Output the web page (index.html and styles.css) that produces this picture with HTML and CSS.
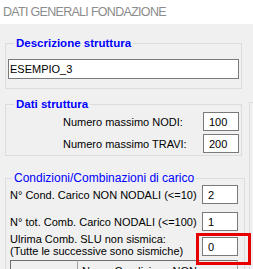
FILE: index.html
```html
<!DOCTYPE html>
<html lang="it">
<head>
    <meta charset="UTF-8">
    <meta name="viewport" content="width=device-width, initial-scale=1.0">
    <title>Dati generali fondazione</title>
    <link rel="stylesheet" href="styles.css">
</head>
<body>
    <div class="title">DATI GENERALI FONDAZIONE</div>
    <div class="main">
        <div class="left">
            <fieldset class="group g1">
                <legend class="bold">Descrizione struttura</legend>
                <input class="wide" type="text" value="ESEMPIO_3">
            </fieldset>

            <fieldset class="group g2">
                <legend class="bold">Dati struttura</legend>
                <div class="row">
                    <span class="lbl">Numero massimo NODI:</span>
                    <input class="num" type="text" value="100">
                </div>
                <div class="row">
                    <span class="lbl">Numero massimo TRAVI:</span>
                    <input class="num" type="text" value="200">
                </div>
            </fieldset>

            <fieldset class="group g3">
                <legend class="big">Condizioni/Combinazioni di carico</legend>
                <div class="row r1">
                    <span class="lbl">N° Cond. Carico NON NODALI (&lt;=10)</span>
                    <input class="num" type="text" value="2">
                </div>
                <div class="row r2">
                    <span class="lbl">N° tot. Comb. Carico NODALI (&lt;=100)</span>
                    <input class="num" type="text" value="1">
                </div>
                <div class="row r3">
                    <span class="lbl two">Ulrima Comb. SLU non sismica:<br>(Tutte le successive sono sismiche)</span>
                    <input class="num" type="text" value="0">
                    <div class="mark"></div>
                </div>
                <table class="grid">
                    <tr>
                        <th class="c1">N° Cond.</th>
                        <th class="c2">Nome Condizione NON nodale</th>
                    </tr>
                    <tr>
                        <td>1</td>
                        <td></td>
                    </tr>
                </table>
            </fieldset>
        </div>
        <div class="side"></div>
    </div>
</body>
</html>
```

FILE: styles.css
```css
body {
    margin: 0;
    width: 253px;
    height: 269px;
    overflow: hidden;
    background-color: #f0f0f0;
    font-family: "Liberation Sans", Arial, sans-serif;
    font-size: 11px;
    color: #000;
}
.title {
    height: 24px;
    background-color: #fff;
    color: #8c8c8c;
    font-size: 12.5px;
    line-height: 24px;
    letter-spacing: -0.7px;
    padding-left: 3px;
}
.main {
    display: flex;
    padding-left: 5px;
}
.left {
    width: 240px;
}
.side {
    flex: 1;
    margin-left: 4px;
    margin-top: 78px;
    height: 300px;
    border-left: 1px solid #dcdcdc;
    border-top: 1px solid #dcdcdc;
}
.group {
    margin: 0;
    border: 1px solid #dcdcdc;
    padding: 0 2px;
    min-width: 0;
}
.group legend {
    color: #0000ff;
    padding: 0 2px;
    margin-left: 6px;
}
.bold {
    font-weight: bold;
    font-size: 11.5px;
    line-height: 13px;
}
.big {
    font-size: 12px;
    line-height: 14px;
}
.g1 {
    width: 237px;
    box-sizing: border-box;
    margin-top: 13px;
    padding-top: 9px;
    padding-bottom: 9px;
}
.g2 {
    width: 237px;
    box-sizing: border-box;
    margin-top: 9px;
    padding-top: 1px;
    padding-bottom: 2px;
}
.g3 {
    width: 240px;
    box-sizing: border-box;
    margin-top: 15px;
    padding: 0 6px 20px 4px;
}
.g3 legend {
    margin-left: 2px;
}
input {
    box-sizing: border-box;
    margin: 0;
    border: 1px solid #7a7a7a;
    background: #fff;
    font-family: "Liberation Sans", Arial, sans-serif;
    font-size: 11px;
    color: #000;
    outline: none;
}
.wide {
    display: block;
    width: 100%;
    height: 20px;
    padding: 0 1px;
}
.num {
    width: 36px;
    height: 19px;
    padding: 0 0 0 5px;
    flex: none;
}
.row {
    display: flex;
    align-items: center;
    justify-content: space-between;
}
.g2 .row {
    padding-left: 55px;
}
.g2 .row + .row {
    margin-top: 3px;
}
.r2 {
    margin-top: 8px;
}
.r3 {
    margin-top: 2px;
    align-items: flex-end;
    position: relative;
}
.r3 .num {
    margin-bottom: 1px;
}
.two {
    line-height: 12px;
}
.mark {
    position: absolute;
    left: 186px;
    top: 0;
    width: 55px;
    height: 32px;
    box-sizing: border-box;
    border: 3px solid #e60000;
}
.grid {
    margin-top: 3px;
    width: 228px;
    border-collapse: collapse;
    border-top: 1px solid #6e6e6e;
    border-left: 1px solid #6e6e6e;
}
.grid th {
    font-weight: normal;
    font-size: 11px;
    text-align: left;
    padding: 4px 4px 2px;
    background: #f0f0f0;
    border-right: 1px solid #a0a0a0;
    border-bottom: 1px solid #a0a0a0;
}
.grid .c1 {
    width: 53px;
    padding-left: 9px;
}
.grid td {
    background: #fff;
    height: 16px;
    border-right: 1px solid #d0d0d0;
}
```
